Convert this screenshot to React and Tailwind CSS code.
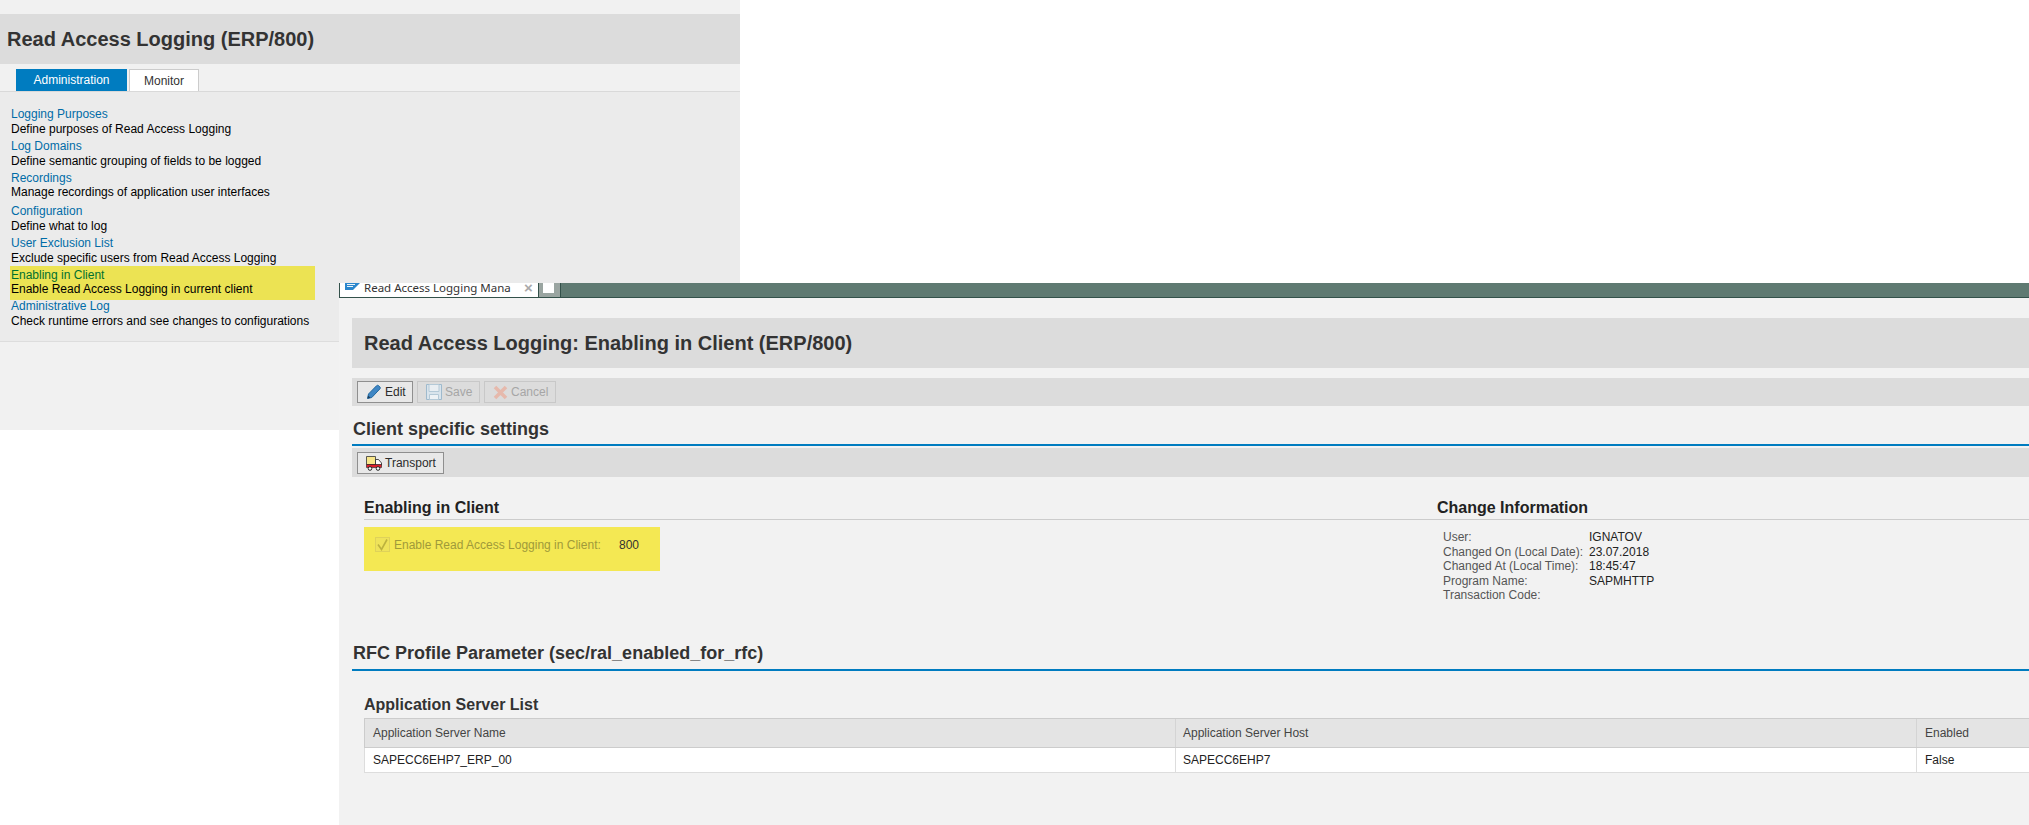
const menuItems = [
  { title: "Logging Purposes", text: "Define purposes of Read Access Logging", box: "h-[32px]" },
  { title: "Log Domains", text: "Define semantic grouping of fields to be logged", box: "h-[32px]" },
  { title: "Recordings", text: "Manage recordings of application user interfaces", box: "h-[33px]", tight: true },
  { title: "Configuration", text: "Define what to log", box: "h-[32px]" },
  { title: "User Exclusion List", text: "Exclude specific users from Read Access Logging", box: "h-[30px]" },
];

const changeInfo = [
  ["User:", "IGNATOV"],
  ["Changed On (Local Date):", "23.07.2018"],
  ["Changed At (Local Time):", "18:45:47"],
  ["Program Name:", "SAPMHTTP"],
  ["Transaction Code:", ""],
];

// small pictures from the SAP toolbar
const PencilIcon = () => (
  <svg width="16" height="16" viewBox="0 0 16 16">
    <path d="M1.5 14.5l1-4.5 8-8.2c.8-.7 1.6-.7 2.3 0l1 1c.7.7.7 1.5 0 2.2L5.800 13.500z" fill="#3f86c4" stroke="#22689f" />
    <path d="M1.500 14.500l.7-3 2.300 2.300z" fill="#1d3f5c" />
  </svg>
);

const SaveIcon = () => (
  <svg width="16" height="16" viewBox="0 0 16 16">
    <path d="M.5.500h15v15H.5z" fill="#d9e4ec" stroke="#9fbacd" />
    <path d="M3 .500h10v7H3z" fill="#e9eef2" stroke="#b4c9d7" />
    <path d="M3.500 10.500h9v5h-9z" fill="#eef2f5" stroke="#b4c9d7" />
  </svg>
);

const CancelIcon = () => (
  <svg width="15" height="15" viewBox="0 0 15 15">
    <path d="M2 2l11 11M13 2L2 13" stroke="#e6b9ac" strokeWidth="3.600" />
  </svg>
);

const TruckIcon = () => (
  <svg width="16" height="16" viewBox="0 0 16 16">
    <path d="M.500 1.500h9v8h-9z" fill="#f8e68a" stroke="#333" strokeWidth=".800" />
    <path d="M9.500 4.500h3l3 3.500v2h-6z" fill="#fff" stroke="#222" strokeWidth=".800" />
    <path d="M.500 9.500h15v3H.500z" fill="#dc1f2b" stroke="#222" strokeWidth=".600" />
    <circle cx="4" cy="13.500" r="1.800" fill="#fff" stroke="#222" />
    <circle cx="12" cy="13.500" r="1.800" fill="#fff" stroke="#222" />
  </svg>
);

const SapIcon = () => (
  <svg width="15" height="7" viewBox="0 0 15 7">
    <path d="M0 0h15L8 7H0z" fill="#2a86cc" />
    <path d="M2 1.500h8M2 3.500h6" stroke="#fff" strokeWidth=".900" />
  </svg>
);

const TickIcon = () => (
  <svg width="13" height="13" viewBox="0 0 13 13">
    <path d="M2 6.500l3.500 5L11 1.500" fill="none" stroke="#bdb23e" strokeWidth="1.600" />
  </svg>
);

const ToolButton = ({ icon, label, width, disabled }) => (
  <button
    className={`flex h-[22px] items-center gap-[3px] border pl-[8px] text-[12px] ${width} ${
      disabled ? "border-[#c8c8c8] text-[#a6a6a6]" : "border-[#8f8f8f] bg-[#e8e8e8] text-[#2c2c2c]"
    }`}
  >
    {icon}
    {label}
  </button>
);

const App = () => {
  return (
    <div className="relative h-[825px] w-[2029px] overflow-hidden bg-white font-['Liberation_Sans',Arial,sans-serif]">
      {/* left window */}
      <div className="absolute left-0 top-0 h-[430px] w-[740px] bg-[#f1f1f1] pt-[14px]">
        <div className="flex h-[50px] items-center bg-[#dcdcdc] pl-[7px] text-[20px] font-bold text-[#333333]">
          Read Access Logging (ERP/800)
        </div>
        <div className="flex h-[28px] items-end gap-[2px] border-b border-[#d9d9d9] pl-[16px] text-[12px]">
          <div className="flex h-[22px] w-[111px] items-center justify-center bg-[#007cc0] text-white">
            Administration
          </div>
          <div className="flex h-[22px] w-[70px] items-center justify-center border-x border-t border-[#cccccc] bg-white text-[#333333]">
            Monitor
          </div>
        </div>
        <div className="h-[250px] border-b border-[#dddddd] bg-[#ebebeb] pl-[11px] pt-[15px] text-[12px] leading-[15px] text-black">
          {menuItems.map((item) => (
            <div key={item.title} className={item.box}>
              <div className={item.tight ? "h-[14px] text-[#006ca7]" : "h-[15px] text-[#006ca7]"}>{item.title}</div>
              <div>{item.text}</div>
            </div>
          ))}
          <div className="-ml-px h-[34px] w-[305px] bg-[#ece353] pl-px pt-[2px] leading-[14px]">
            <div className="text-[#00702f]">Enabling in Client</div>
            <div>Enable Read Access Logging in current client</div>
          </div>
          <div className="-mt-px h-[32px]">
            <div className="h-[15px] text-[#006ca7]">Administrative Log</div>
            <div>Check runtime errors and see changes to configurations</div>
          </div>
        </div>
      </div>

      {/* right window */}
      <div className="absolute bottom-0 left-[339px] right-0 top-[283px] bg-[#f2f2f2]">
        <div className="flex h-[15px] border-b border-[#33514a] bg-[#5f7a72]">
          <div className="flex w-[199px] items-start gap-[4px] border-l border-[#33514a] bg-white pl-[5px] text-[#333333]">
            <SapIcon />
            <span className="w-[146px] shrink-0 whitespace-nowrap font-['Noto_Sans',sans-serif] text-[11.5px] leading-[10px]">
              Read Access Logging Mana
            </span>
            <span className="ml-[10px] text-[15px] font-bold leading-[10px] text-[#aaaaaa]">×</span>
          </div>
          <div className="w-[23px] border-x border-[#33514a] bg-[#9aa5a1] pl-[4px]">
            <div className="h-[10px] w-[11px] bg-white" />
          </div>
        </div>

        <div className="ml-[13px] mt-[20px] flex h-[50px] items-center bg-[#dcdcdc] pl-[12px] text-[20px] font-bold text-[#333333]">
          Read Access Logging: Enabling in Client (ERP/800)
        </div>

        <div className="ml-[13px] mt-[10px] flex h-[28px] items-center gap-[4px] bg-[#dcdcdc] pl-[5px]">
          <ToolButton icon={<PencilIcon />} label="Edit" width="w-[56px]" />
          <ToolButton icon={<SaveIcon />} label="Save" width="w-[63px]" disabled />
          <ToolButton icon={<CancelIcon />} label="Cancel" width="w-[72px]" disabled />
        </div>

        <div className="ml-[13px] flex h-[40px] items-end border-b-2 border-[#007cc0] pb-[4px] pl-px text-[18px] font-bold leading-[22px] text-[#333333]">
          Client specific settings
        </div>
        <div className="ml-[13px] mt-[2px] flex h-[29px] items-center bg-[#dcdcdc] pl-[5px]">
          <ToolButton icon={<TruckIcon />} label="Transport" width="w-[87px]" />
        </div>

        <div className="ml-[25px] mt-[21px] flex h-[22px] border-b border-[#cccccc] text-[16px] font-bold leading-[20px] text-[#222222]">
          <div className="w-[1073px]">Enabling in Client</div>
          <div>Change Information</div>
        </div>
        <div className="ml-[25px] flex h-[120px] text-[12px]">
          <div className="mt-[7px] flex h-[44px] w-[296px] bg-[#f4e853] pl-[11px] pt-[10px]">
            <div className="flex h-[15px] w-[15px] items-center justify-center border border-[#dfd25a] bg-[#efe35a]">
              <TickIcon />
            </div>
            <span className="ml-[4px] w-[225px] leading-[16px] text-[#a09a3a]">Enable Read Access Logging in Client:</span>
            <span className="leading-[16px] text-[#333333]">800</span>
          </div>
          <div className="ml-[783px] mt-[10px] leading-[14.5px]">
            {changeInfo.map(([label, value]) => (
              <div key={label} className="flex">
                <div className="w-[146px] text-[#555555]">{label}</div>
                <div className="text-[#222222]">{value}</div>
              </div>
            ))}
          </div>
        </div>

        <div className="ml-[13px] flex h-[31px] items-end border-b-2 border-[#007cc0] pb-[5px] pl-px text-[18px] font-bold leading-[22px] text-[#333333]">
          RFC Profile Parameter (sec/ral_enabled_for_rfc)
        </div>

        <div className="ml-[25px] mt-[24px] h-[23px] text-[16px] font-bold leading-[20px] text-[#333333]">
          Application Server List
        </div>
        <div className="ml-[25px] text-[12px]">
          <div className="flex h-[30px] border-y border-l border-[#cccccc] bg-[#e4e4e4] text-[#444444]">
            <div className="flex w-[811px] items-center border-r border-[#d4d4d4] pl-[8px]">Application Server Name</div>
            <div className="flex w-[741px] items-center border-r border-[#d4d4d4] pl-[7px]">Application Server Host</div>
            <div className="flex items-center pl-[8px]">Enabled</div>
          </div>
          <div className="flex h-[25px] border-b border-l border-[#dddddd] bg-white text-[#222222]">
            <div className="flex w-[811px] items-center border-r border-[#dddddd] pl-[8px]">SAPECC6EHP7_ERP_00</div>
            <div className="flex w-[741px] items-center border-r border-[#dddddd] pl-[7px]">SAPECC6EHP7</div>
            <div className="flex items-center pl-[8px]">False</div>
          </div>
        </div>
      </div>
    </div>
  );
};

export default App;
